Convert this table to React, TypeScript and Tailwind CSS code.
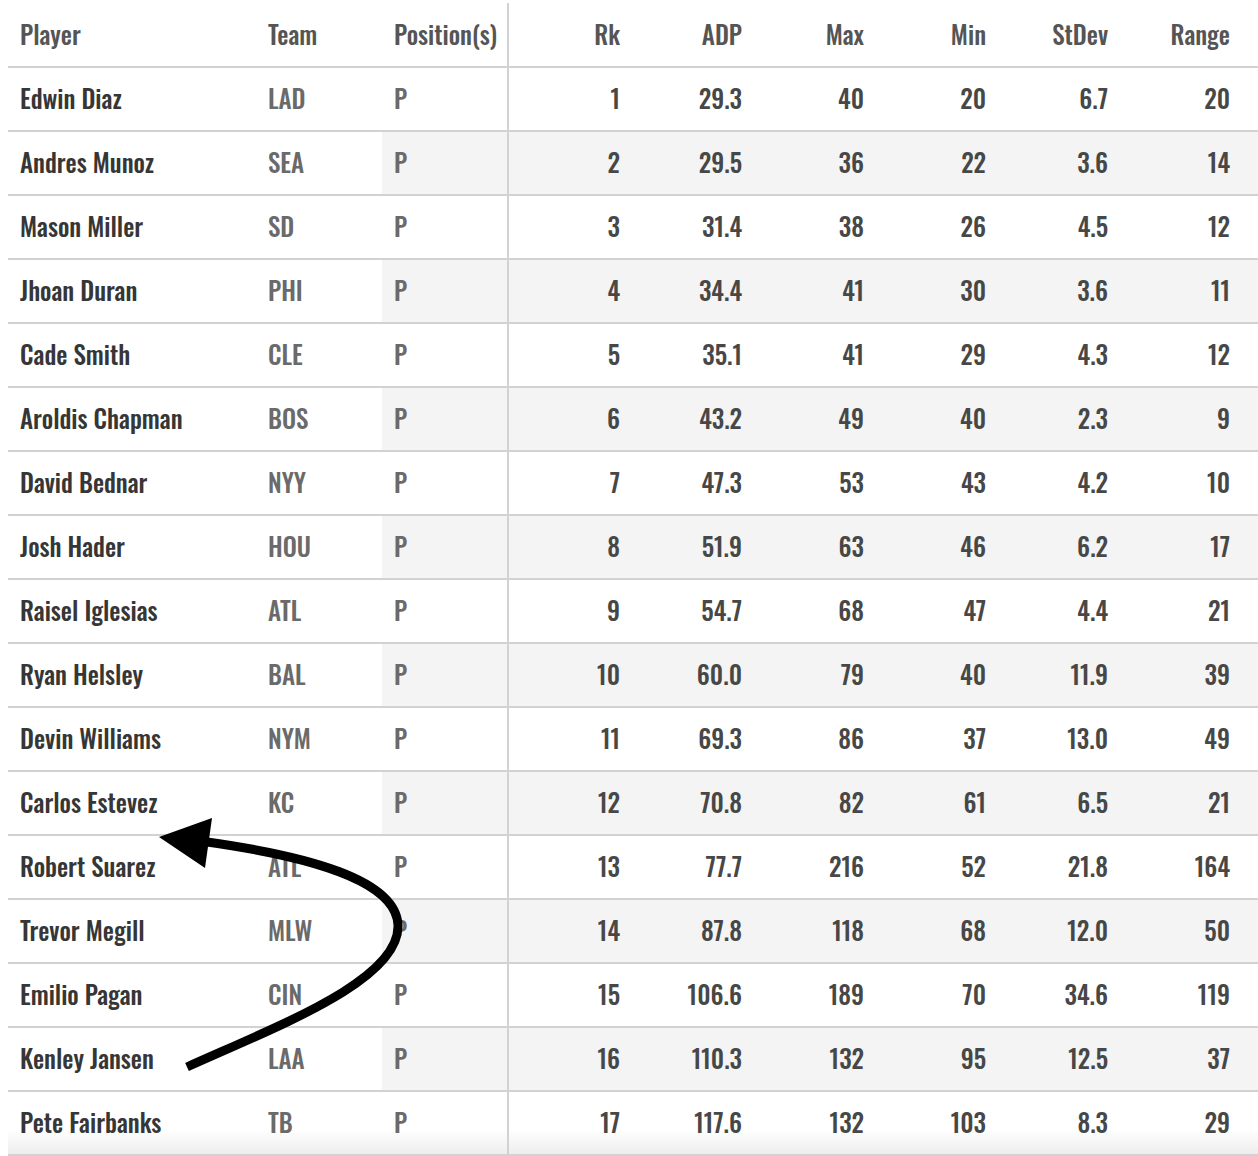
type Row = [string, string, number, string, number, number, string, number];

const rows: Row[] = [
  ["Edwin Diaz", "LAD", 1, "29.3", 40, 20, "6.7", 20],
  ["Andres Munoz", "SEA", 2, "29.5", 36, 22, "3.6", 14],
  ["Mason Miller", "SD", 3, "31.4", 38, 26, "4.5", 12],
  ["Jhoan Duran", "PHI", 4, "34.4", 41, 30, "3.6", 11],
  ["Cade Smith", "CLE", 5, "35.1", 41, 29, "4.3", 12],
  ["Aroldis Chapman", "BOS", 6, "43.2", 49, 40, "2.3", 9],
  ["David Bednar", "NYY", 7, "47.3", 53, 43, "4.2", 10],
  ["Josh Hader", "HOU", 8, "51.9", 63, 46, "6.2", 17],
  ["Raisel Iglesias", "ATL", 9, "54.7", 68, 47, "4.4", 21],
  ["Ryan Helsley", "BAL", 10, "60.0", 79, 40, "11.9", 39],
  ["Devin Williams", "NYM", 11, "69.3", 86, 37, "13.0", 49],
  ["Carlos Estevez", "KC", 12, "70.8", 82, 61, "6.5", 21],
  ["Robert Suarez", "ATL", 13, "77.7", 216, 52, "21.8", 164],
  ["Trevor Megill", "MLW", 14, "87.8", 118, 68, "12.0", 50],
  ["Emilio Pagan", "CIN", 15, "106.6", 189, 70, "34.6", 119],
  ["Kenley Jansen", "LAA", 16, "110.3", 132, 95, "12.5", 37],
  ["Pete Fairbanks", "TB", 17, "117.6", 132, 103, "8.3", 29],
];

const statHeaders = ["Rk", "ADP", "Max", "Min", "StDev", "Range"];

export default function App() {
  return (
    <div className="relative w-[1258px] h-[1156px] bg-white overflow-hidden font-['Oswald','Roboto_Condensed',sans-serif] font-medium">
      <div className="ml-2 flex flex-col">
        {/* Header */}
        <div className="flex h-[68px] border-b-2 border-[#d2d2d2] text-[25px] text-[#555] leading-none">
          <div className="w-[248px] pl-3 flex items-center">Player</div>
          <div className="w-[126px] pl-3 flex items-center">Team</div>
          <div className="w-[125px] pl-3 flex items-center">Position(s)</div>
          <div className="flex-1 flex flex-col">
            <div className="h-[3px]" />
            <div className="flex-1 flex border-l-2 border-[#d2d2d2]">
              {statHeaders.map((h) => (
                <div key={h} className="w-[122px] pr-[11px] flex items-center justify-end pb-[3px]">
                  {h}
                </div>
              ))}
            </div>
          </div>
        </div>
        {/* Body */}
        {rows.map((r, i) => {
          const striped = i % 2 === 1;
          const last = i === rows.length - 1;
          return (
            <div
              key={r[0]}
              className={
                last
                  ? "flex h-[64px] border-b-2 border-[#d2d2d2] text-[25px] leading-none bg-gradient-to-b from-white from-60% to-[#ededed]"
                  : "flex h-[64px] border-b-2 border-[#d2d2d2] text-[25px] leading-none"
              }
            >
              <div className="w-[248px] pl-3 pb-1 flex items-center text-[#363636]">{r[0]}</div>
              <div className="w-[126px] pl-3 pb-1 flex items-center text-[#6a6a6a]">{r[1]}</div>
              <div
                className={
                  striped
                    ? "w-[125px] pl-3 pb-1 flex items-center text-[#6a6a6a] bg-[#f4f4f4]"
                    : "w-[125px] pl-3 pb-1 flex items-center text-[#6a6a6a]"
                }
              >
                P
              </div>
              <div
                className={
                  striped
                    ? "flex-1 flex border-l-2 border-[#d2d2d2] text-[#474747] bg-[#f4f4f4]"
                    : "flex-1 flex border-l-2 border-[#d2d2d2] text-[#474747]"
                }
              >
                {[r[2], r[3], r[4], r[5], r[6], r[7]].map((v, j) => (
                  <div key={j} className="w-[122px] pr-[11px] pb-1 flex items-center justify-end">
                    {v}
                  </div>
                ))}
              </div>
            </div>
          );
        })}
      </div>

      {/* Hand-drawn arrow annotation */}
      <svg
        className="absolute inset-0 pointer-events-none"
        width="1258"
        height="1156"
        viewBox="0 0 1258 1156"
      >
        <path
          d="M 187 1067 C 280 1025, 400 980, 398 925 C 396 880, 310 856, 200 841"
          fill="none"
          stroke="#000"
          strokeWidth="9"
        />
        <polygon points="159,837 212,818 205,868" fill="#000" />
      </svg>
    </div>
  );
}
